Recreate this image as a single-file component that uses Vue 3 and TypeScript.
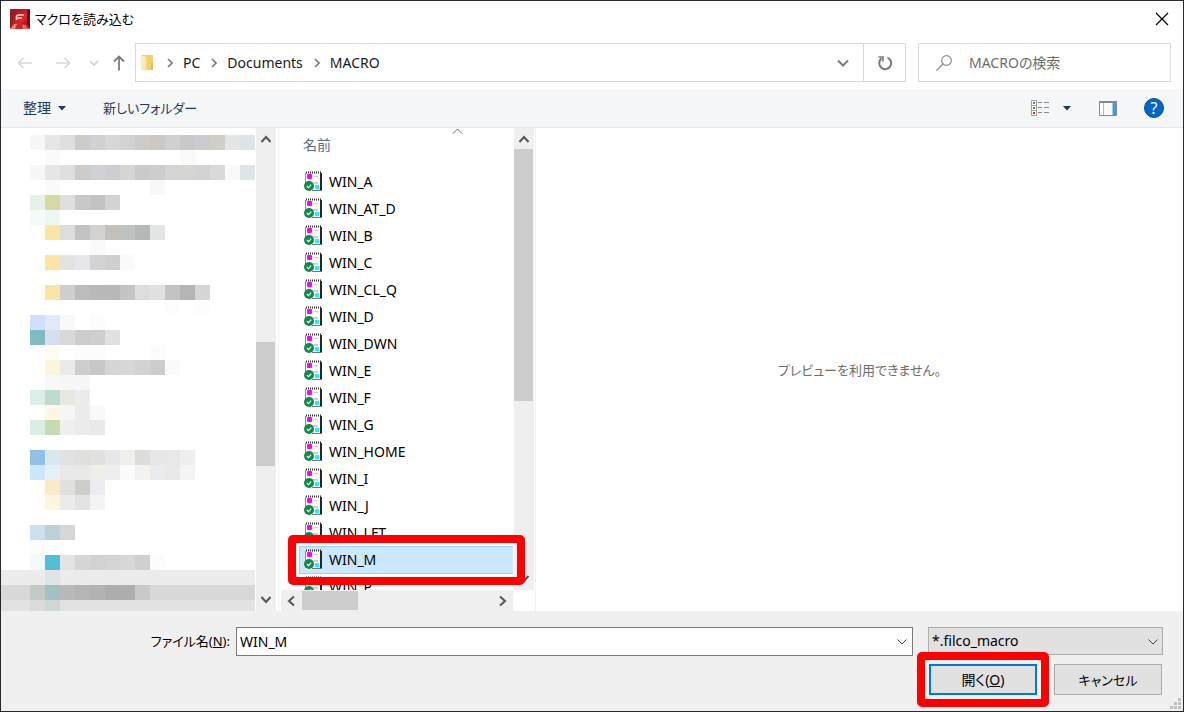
<script setup lang="ts">
import { ref } from 'vue'

interface MosaicRow {
  cells: string[]
  shade?: string
}

const fileName = ref('WIN_M')
const fileType = ref('*.filco_macro')
const searchText = ref('')
const selected = ref('WIN_M')

const path: string[] = ['PC', 'Documents', 'MACRO']

const files: string[] = [
  'WIN_A', 'WIN_AT_D', 'WIN_B', 'WIN_C', 'WIN_CL_Q', 'WIN_D', 'WIN_DWN', 'WIN_E',
  'WIN_F', 'WIN_G', 'WIN_HOME', 'WIN_I', 'WIN_J', 'WIN_LFT', 'WIN_M', 'WIN_P',
]

// One line per mosaic row: hex colours from left to right, "-" for an empty cell.
const row = (line: string, shade?: string): MosaicRow => ({
  cells: line.split(' ').map((c) => (c === '-' || c === '' ? 'transparent' : `#${c}`)),
  shade,
})

const mosaic: MosaicRow[] = [
  row('f7f7f7 e5e7e6 dde0df cecbc9 d0d1d5 d7d7d8 d2d2d2 cccccd cec8c5 d0d0d0 c9c9cc cbccd0 d1cec6 e2e6e9 dfe3e7'),
  row('- fafafa - - - - - - - - fafaf9 fefefe'),
  row('f7f7f7 e5e7e6 dde0df cecbc9 d0d1d5 cecdd1 d6d6d3 cacacb cccece d5d5d3 d5d5d3 d3d3d6 d9d9d9 f9f9f9 dfe4e7'),
  row('- fafafa - - - - - - f8f8f8'),
  row('e6f1ea d6daa2 e0dfde c8c8c9 c5c3c2 d2d3d5'),
  row('f5faf8 eef7f2'),
  row('fffefa fbe5a3 dddddd c3c3c4 d3d2d0 c1c0bd c0c2c1 b5b8b7 e2e6e7'),
  row('- - - - f9fbfa'),
  row('fffefa fbe5a3 e5e3e2 e5e7ea d3d3d6 d0cfcd fbfbfb'),
  row('-'),
  row('fffefa fbe5a3 d1cfce bcbcbc b9b9b9 b8b8b8 c4c4c7 dcdedd e1e1e0 c5c2c4 b3b6b5 d5d6d5'),
  row('- - - - - - - - - fdfdfd - fdfdfd'),
  row('cfdffe e2e8f8 f9f9f9 - fcfcfc'),
  row('80bbc1 d6dfef d9d9d7 cdcdcd d1ced0 e1e1e3'),
  row('- fffcf2 - fbfdfd fcfcfc - - - fcfcfc'),
  row('fffefd fcf5dd eaeaea d0cecc c8c8c8 d6d4d6 d8d6d8 d3d3d3 cdcecc f8fafc'),
  row('fefefe f8f8f8 f7f7f7 f7f7f7'),
  row('dceee6 bfdbd0 e8e8e3 ececee'),
  row('fefefc fef7e5 f6f6f6 ececec f9f9f9'),
  row('dceee4 c8dbb0 f0eeef eaecee e9e9e9'),
  row('-'),
  row('8fc1e9 d9e7f0 e2e2e2 dfdfde e1e1e0 e6e7e9 efefee dcdcda e6e7e9 e8e8e8 eeeeee'),
  row('c9e8fb e5f1f6 e9e9e9 e9e9e9 eeeeeb eeeeee fafafa f3f2f0 e9ebed e8e8e8 f4f4f4'),
  row('fffefb fbebc4 e0e0de cdcdcc ecedf0'),
  row('fffefc fdf5dc ebecea e3e3e3 f3f4f6'),
  row('-'),
  row('cce1ef becfd8 d6d8d7'),
  row('fcfcfc'),
  row('f1fbfc 4fbfda e4e4e4 d6d6d6 d2d2d2 d5d5d5 d7d7d7 cfd0d3 fcfcfc'),
  row('- dfe4e6', '#ececec'),
  row('c1cbc4 a1c1c4 bab9b8 b4b5b7 b2b2b2 adadad aeaeaf c9c9c9', '#d8d8d8'),
  row('d8dddb cfd8d2', '#e2e2e2'),
]
</script>

<template>
  <main class="dialog">
    <header class="titlebar">
      <svg class="logo" viewBox="0 0 20 20" aria-hidden="true">
        <defs>
          <linearGradient id="key" x1="0" y1="0" x2="1" y2="1">
            <stop offset="0" stop-color="#8c1a1c" />
            <stop offset="0.45" stop-color="#cf1a1e" />
            <stop offset="0.7" stop-color="#e3252a" />
            <stop offset="1" stop-color="#a01015" />
          </linearGradient>
        </defs>
        <rect width="20" height="20" rx="1" fill="#b3161a" />
        <path d="M0 20L4 15H16L20 20Z" fill="#c9262a" />
        <path d="M0 20L4 15H7L5 20Z" fill="#f08078" />
        <path d="M13 20L12 16H15L18 20Z" fill="#ee6a63" />
        <path d="M0 0L3 2V15L0 19Z" fill="#8c2424" />
        <path d="M20 0L17 2V15L20 19Z" fill="#6d0d10" />
        <rect x="3" y="1" width="14" height="14" rx="2" fill="url(#key)" />
        <path d="M6.500 11V8Q6.500 6 8.500 6H14M6.500 9H12" fill="none" stroke="#f1dbd8" stroke-width="1.600" />
      </svg>
      <h1>マクロを読み込む</h1>
      <button class="plain close" type="button" aria-label="閉じる">
        <svg width="14" height="14" viewBox="0 0 14 14"><path d="M1 1L13 13M13 1L1 13" stroke="#000" stroke-width="1.2" /></svg>
      </button>
    </header>

    <nav class="navrow" aria-label="ナビゲーション">
      <div class="history">
        <button class="plain" type="button" disabled aria-label="戻る">
          <svg width="16" height="12" viewBox="0 0 16 12"><path d="M15 6H1.500M6.500 1L1.500 6L6.500 11" fill="none" stroke="#d9d9d9" stroke-width="1.600" /></svg>
        </button>
        <button class="plain" type="button" disabled aria-label="進む">
          <svg width="16" height="12" viewBox="0 0 16 12"><path d="M1 6H14.500M9.500 1L14.500 6L9.500 11" fill="none" stroke="#d9d9d9" stroke-width="1.600" /></svg>
        </button>
        <button class="plain recent" type="button" disabled aria-label="最近表示した場所">
          <svg width="10" height="6" viewBox="0 0 10 6"><path d="M1 1L5 5L9 1" fill="none" stroke="#cfcfcf" stroke-width="1.600" /></svg>
        </button>
        <button class="plain up" type="button" aria-label="上へ">
          <svg width="12" height="16" viewBox="0 0 12 16"><path d="M6 15.500V1.500M1 6.500L6 1.500L11 6.500" fill="none" stroke="#7b7b7b" stroke-width="1.800" /></svg>
        </button>
      </div>
      <div class="address">
        <svg class="folder" width="13" height="18" viewBox="0 0 13 18" aria-hidden="true">
          <path d="M1 1H12V16H1Z" fill="#f5cf67" />
          <path d="M0 2H4V17L0 15Z" fill="#fdeeb7" />
          <path d="M4 3H6V16L4 17Z" fill="#fbe08c" />
          <path d="M10 9H12V16H10Z" fill="#e9b94a" />
        </svg>
        <ol>
          <li v-for="part in path" :key="part">
            <svg width="6" height="10" viewBox="0 0 6 10" aria-hidden="true"><path d="M1 1L5 5L1 9" fill="none" stroke="#7a7a7a" stroke-width="1.600" /></svg>
            <a href="#">{{ part }}</a>
          </li>
        </ol>
        <button class="plain history-drop" type="button" aria-label="以前の場所">
          <svg width="12" height="8" viewBox="0 0 12 8"><path d="M1 1.500L6 6.500L11 1.500" fill="none" stroke="#7b7b7b" stroke-width="2" /></svg>
        </button>
        <button class="plain refresh" type="button" aria-label="最新の情報に更新">
          <svg width="16" height="16" viewBox="0 0 16 16"><path d="M10.500 2.600A6 6 0 1 1 4.500 3.400" fill="none" stroke="#7b7b7b" stroke-width="2" /><path d="M1.500 2H6V6.500" fill="none" stroke="#7b7b7b" stroke-width="1.600" /></svg>
        </button>
      </div>
      <label class="search">
        <svg width="16" height="16" viewBox="0 0 16 16" aria-hidden="true"><circle cx="10.500" cy="5.500" r="4.800" fill="none" stroke="#8a8a8a" stroke-width="1.200" /><path d="M7 9L0.500 15.500" stroke="#8a8a8a" stroke-width="1.200" /></svg>
        <input v-model="searchText" type="search" placeholder="MACROの検索" aria-label="MACROの検索" />
      </label>
    </nav>

    <div class="toolbar">
      <button class="plain organize" type="button">
        整理
        <svg width="8" height="5" viewBox="0 0 8 5" aria-hidden="true"><path d="M0 0H8L4 4.500Z" fill="#1e395b" /></svg>
      </button>
      <button class="plain kana" type="button">新しいフォルダー</button>
      <div class="tools">
        <button class="plain" type="button" aria-label="表示方法">
          <svg width="18" height="16" viewBox="0 0 18 16">
            <path d="M0.500 0.500H5.500V15.500H0.500ZM0.500 5.500H5.500M0.500 10.500H5.500" fill="#fff" stroke="#a0a0a0" />
            <path d="M7 2.500H11M13 2.500H18M7 7.500H11M13 7.500H18M7 12.500H11M13 12.500H18" stroke="#8a8a8a" />
            <rect x="2" y="2" width="2" height="2" fill="#3d7fa8" />
            <rect x="2" y="7" width="2" height="2" fill="#7a7d35" />
            <rect x="2" y="12" width="2" height="2" fill="#c0301c" />
          </svg>
        </button>
        <button class="plain view-drop" type="button" aria-label="その他の表示">
          <svg width="8" height="5" viewBox="0 0 8 5"><path d="M0 0H8L4 4.500Z" fill="#1e395b" /></svg>
        </button>
        <button class="plain pane-toggle" type="button" aria-label="プレビュー ウィンドウ">
          <svg width="18" height="15" viewBox="0 0 18 15">
            <path d="M0.500 0.500H17.500V14.500H0.500Z" fill="#fbfbfb" stroke="#868a8e" />
            <path d="M0 1H18" stroke="#868a8e" stroke-width="2" />
            <path d="M4.500 2V14" stroke="#b9b9b9" />
            <rect x="13" y="2" width="4" height="12" fill="#3c9ae8" />
            <rect x="13" y="2" width="1" height="12" fill="#9ccdf5" />
          </svg>
        </button>
        <button class="plain help" type="button" aria-label="ヘルプ">?</button>
      </div>
    </div>

    <div class="content">
      <aside class="tree">
        <div class="mosaic" aria-hidden="true">
          <div v-for="(line, r) in mosaic" :key="r" class="mosaic-row" :style="{ background: line.shade }">
            <i v-for="(cell, c) in line.cells" :key="c" :style="{ background: cell }"></i>
          </div>
        </div>
        <div class="vscroll">
          <svg width="12" height="8" viewBox="0 0 12 8"><path d="M1.500 7L6 2L10.500 7" fill="none" stroke="#555" stroke-width="2" /></svg>
          <div class="track tree-track"><div class="thumb"></div></div>
          <svg width="12" height="8" viewBox="0 0 12 8"><path d="M1.500 1L6 6L10.500 1" fill="none" stroke="#555" stroke-width="2" /></svg>
        </div>
      </aside>

      <section class="files" aria-label="ファイル一覧">
        <div class="listing">
          <button class="plain column-head" type="button">
            名前
            <svg width="11" height="6" viewBox="0 0 11 6" aria-hidden="true"><path d="M1 5.500L5.500 1L10 5.500" fill="none" stroke="#6b6b6b" /></svg>
          </button>
          <ul>
            <li v-for="file in files" :key="file">
              <button class="file" :class="{ selected: file === selected }" type="button" @click="selected = fileName = file">
                <svg width="20" height="21" viewBox="0 0 20 21" aria-hidden="true">
                  <path d="M2 2H17V20H2Z" fill="#fafafa" />
                  <path d="M1.500 2V12" stroke="#8b8b8b" />
                  <path d="M16 2H18V20H16Z" fill="#262626" />
                  <path d="M8 19.500H18" stroke="#777" />
                  <path d="M2 1.500H17" stroke="#333" stroke-width="2" stroke-dasharray="1 1" />
                  <path d="M10 5.500H14M8 11.500H14M10 12.500H14" stroke="#cfcfcf" />
                  <rect x="3" y="3" width="5" height="5" rx="1" fill="#f0f" />
                  <rect x="11" y="14" width="4" height="4" fill="#0ff" />
                  <circle cx="5" cy="15" r="5" fill="#0f8a4d" />
                  <path d="M2.800 15L4.500 16.600L7.200 13.600" fill="none" stroke="#fff" stroke-width="1.200" />
                </svg>
                {{ file }}
              </button>
            </li>
          </ul>
        </div>
        <div class="vscroll">
          <svg width="12" height="8" viewBox="0 0 12 8"><path d="M1.500 7L6 2L10.500 7" fill="none" stroke="#555" stroke-width="2" /></svg>
          <div class="track list-track"><div class="thumb"></div></div>
          <svg width="12" height="8" viewBox="0 0 12 8"><path d="M1.500 1L6 6L10.500 1" fill="none" stroke="#555" stroke-width="2" /></svg>
        </div>
        <div class="hscroll">
          <svg width="8" height="12" viewBox="0 0 8 12"><path d="M7 1.500L2 6L7 10.500" fill="none" stroke="#555" stroke-width="2" /></svg>
          <div class="track"><div class="thumb"></div></div>
          <svg width="8" height="12" viewBox="0 0 8 12"><path d="M1 1.500L6 6L1 10.500" fill="none" stroke="#555" stroke-width="2" /></svg>
        </div>
        <div class="mark file-mark"></div>
      </section>

      <section class="preview kana">プレビューを利用できません。</section>
    </div>

    <form class="footer" @submit.prevent>
      <div class="fields">
        <label class="kana" for="file-name">ファイル名(<u>N</u>):</label>
        <div class="combo">
          <input id="file-name" v-model="fileName" type="text" />
          <button class="plain" type="button" aria-label="履歴">
            <svg width="10" height="6" viewBox="0 0 10 6"><path d="M0.500 0.500L5 5L9.500 0.500" fill="none" stroke="#444" /></svg>
          </button>
        </div>
        <div class="type">
          <select v-model="fileType" aria-label="ファイルの種類">
            <option>*.filco_macro</option>
          </select>
          <svg width="10" height="6" viewBox="0 0 10 6" aria-hidden="true"><path d="M0.500 0.500L5 5L9.500 0.500" fill="none" stroke="#444" /></svg>
        </div>
      </div>
      <div class="actions">
        <div class="open-wrap">
          <button class="push primary" type="submit">開く(<u>O</u>)</button>
          <div class="mark open-mark"></div>
        </div>
        <button class="push kana" type="button">キャンセル</button>
      </div>
      <svg class="grip" width="11" height="11" viewBox="0 0 11 11" aria-hidden="true">
        <path d="M8 0H11V3H8ZM4 4H7V7H4ZM8 4H11V7H8ZM0 8H3V11H0ZM4 8H7V11H4ZM8 8H11V11H8Z" fill="#bfbfbf" />
      </svg>
    </form>
  </main>
</template>

<style>
body {
  margin: 0;
}
</style>

<style scoped>
* {
  box-sizing: border-box;
}

.dialog {
  display: flex;
  flex-direction: column;
  height: 100vh;
  border: 1px solid #26292d;
  background: #fff;
  color: #000;
  font: 14px/20px "Noto Sans", "Noto Sans CJK JP", sans-serif;
  font-feature-settings: "palt";
  overflow: hidden;
}

button,
input,
select {
  font: inherit;
  font-feature-settings: inherit;
  color: inherit;
}

svg {
  display: block;
  flex: none;
}

.plain {
  display: flex;
  align-items: center;
  justify-content: center;
  padding: 0;
  border: 0;
  background: none;
}

.kana {
  font-size: 13px;
}

.titlebar {
  display: flex;
  align-items: center;
  height: 36px;
  flex: none;
  padding: 0 14px 0 9px;
}

.logo {
  width: 20px;
  height: 20px;
}

h1 {
  flex: 1;
  margin: 0 0 0 5px;
  font-size: 13px;
  font-weight: 400;
}

.navrow {
  display: flex;
  flex: none;
  height: 39px;
  margin: 6px 12px 7px 0;
}

.history {
  display: flex;
  align-items: center;
  width: 134px;
  padding-left: 16px;
  gap: 22px;
}

.recent {
  margin-left: -4px;
}

.up {
  margin-left: -8px;
}

.address {
  display: flex;
  align-items: center;
  flex: 1;
  border: 1px solid #d9d9d9;
  padding-left: 5px;
}

ol {
  display: flex;
  flex: 1;
  margin: 0 0 0 13px;
  padding: 0;
  list-style: none;
}

li {
  display: flex;
  align-items: center;
}

ol li {
  gap: 10px;
  margin-right: 11px;
}

ol a {
  color: #1a1a1a;
  text-decoration: none;
}

.history-drop {
  width: 40px;
  height: 100%;
}

.refresh {
  width: 42px;
  height: 100%;
  border-left: 1px solid #d9d9d9;
}

.search {
  display: flex;
  align-items: center;
  width: 253px;
  margin-left: 12px;
  padding: 0 12px 0 17px;
  gap: 17px;
  border: 1px solid #d9d9d9;
}

.search input {
  flex: 1;
  min-width: 0;
  padding: 0;
  border: 0;
  outline: 0;
  background: none;
}

.search input::placeholder {
  color: #6d6d6d;
  opacity: 1;
}

.toolbar {
  display: flex;
  align-items: center;
  flex: none;
  height: 39px;
  padding: 0 19px 0 22px;
  gap: 37px;
  border-bottom: 1px solid #e5e6e8;
  background: #f5f6f8;
  color: #1e395b;
}

.organize {
  gap: 7px;
}

.tools {
  display: flex;
  align-items: center;
  margin-left: auto;
}

.view-drop {
  margin-left: 14px;
}

.pane-toggle {
  margin-left: 28px;
}

.help {
  width: 20px;
  height: 20px;
  margin-left: 27px;
  border: 1px solid #0b4f8f;
  border-radius: 50%;
  background: #0067c8;
  color: #fff;
  font-size: 16px;
}

.content {
  display: flex;
  flex: 1;
  min-height: 0;
}

.tree {
  display: flex;
  flex: none;
  width: 278px;
  border-right: 1px solid #f2f2f2;
}

.mosaic {
  width: 254px;
  margin-right: 1px;
  padding-top: 7px;
  overflow: hidden;
}

.mosaic-row {
  display: flex;
  height: 15px;
  padding-left: 29px;
}

.mosaic-row i {
  flex: none;
  width: 15px;
}

.vscroll {
  display: flex;
  flex-direction: column;
  align-items: center;
  width: 20px;
  padding: 7px 0;
  gap: 6px;
  background: #efefef;
}

.track {
  flex: 1;
}

.vscroll .track {
  width: 20px;
}

.thumb {
  background: #cdcdcd;
}

.vscroll .thumb {
  width: 19px;
}

.tree-track {
  padding-top: 193px;
}

.tree-track .thumb {
  height: 124px;
}

.list-track .thumb {
  height: 252px;
}

.files {
  position: relative;
  display: grid;
  flex: none;
  grid-template: minmax(0, 1fr) 21px / 232px 20px;
  column-gap: 1px;
  width: 257px;
  padding-left: 2px;
  border-right: 1px solid #f2f2f2;
}

.listing {
  overflow: hidden;
  padding-left: 18px;
}

.column-head {
  position: relative;
  width: 100%;
  height: 33px;
  justify-content: flex-start;
  padding-left: 4px;
  color: #5b6b80;
}

.column-head svg {
  position: absolute;
  top: 0;
  right: 50px;
}

ul {
  margin: 7px 0 0;
  padding: 0;
  list-style: none;
}

ul li {
  height: 27px;
}

.file {
  display: flex;
  align-items: center;
  width: 100%;
  height: 28px;
  gap: 5px;
  padding: 0 4px;
  border: 1px solid transparent;
  border-right: 0;
  background: none;
}

.file.selected {
  border-color: #99d1ff;
  background: #cce8ff;
}

.hscroll {
  display: flex;
  align-items: center;
  gap: 7px;
  padding: 0 6px;
  background: #efefef;
}

.hscroll .thumb {
  width: 56px;
  height: 19px;
}

.mark {
  position: absolute;
  border: 8px solid #f00;
  border-radius: 5px;
  pointer-events: none;
}

.file-mark {
  top: 407px;
  left: 9px;
  width: 237px;
  height: 50px;
}

.preview {
  display: flex;
  align-items: center;
  justify-content: center;
  flex: 1;
  color: #6d6d6d;
}

.footer {
  position: relative;
  flex: none;
  height: 100px;
  padding: 16px 20px 0 0;
  background: #f0f0f0;
}

.fields {
  display: flex;
}

.fields label {
  width: 235px;
  padding-right: 6px;
  line-height: 29px;
  text-align: right;
}

.combo {
  display: flex;
  flex: 1;
  height: 29px;
  border: 1px solid #7a7a7a;
  background: #fff;
}

.combo input {
  flex: 1;
  min-width: 0;
  padding: 0 3px;
  border: 0;
  outline: 0;
  background: none;
}

.combo button {
  width: 20px;
}

.type {
  position: relative;
  width: 235px;
  margin-left: 15px;
}

.type select {
  width: 100%;
  height: 28px;
  padding: 0 20px 0 3px;
  appearance: none;
  border: 1px solid #adadad;
  border-radius: 0;
  background: #e1e1e1;
}

.type svg {
  position: absolute;
  top: 12px;
  right: 5px;
  pointer-events: none;
}

.actions {
  display: flex;
  justify-content: flex-end;
  gap: 17px;
  margin-top: 8px;
  padding-right: 1px;
}

.open-wrap {
  position: relative;
}

.push {
  display: block;
  width: 108px;
  height: 31px;
  padding: 0;
  border: 1px solid #adadad;
  background: #e1e1e1;
}

.primary {
  border: 2px solid #0078d7;
}

.open-mark {
  inset: -12px;
}

.grip {
  position: absolute;
  right: 2px;
  bottom: 2px;
}
</style>
